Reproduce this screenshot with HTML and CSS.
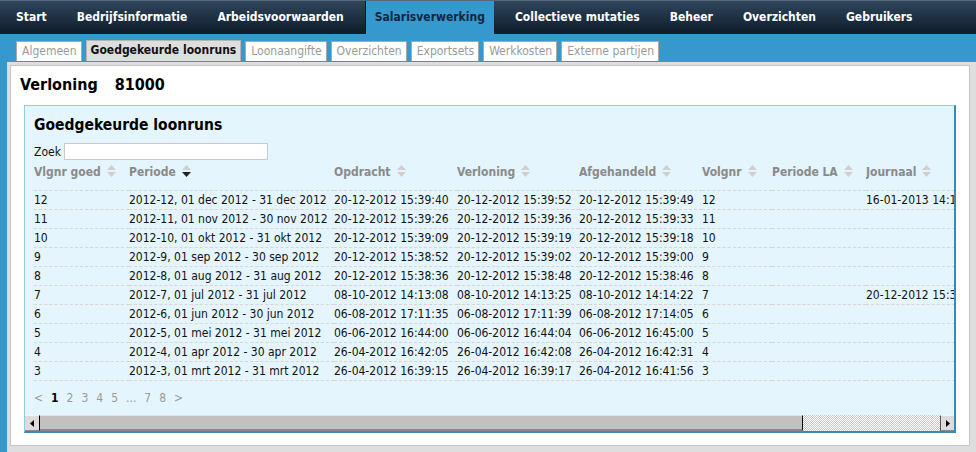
FILE: index.html
```html
<!DOCTYPE html>
<html lang="nl">
<head>
<meta charset="utf-8">
<title>Goedgekeurde loonruns</title>
<link rel="stylesheet" href="styles.css">
</head>
<body>
<nav class="topnav">
  <a class="nav-item">Start</a>
  <a class="nav-item">Bedrijfsinformatie</a>
  <a class="nav-item">Arbeidsvoorwaarden</a>
  <a class="nav-item active">Salarisverwerking</a>
  <a class="nav-item">Collectieve mutaties</a>
  <a class="nav-item">Beheer</a>
  <a class="nav-item">Overzichten</a>
  <a class="nav-item">Gebruikers</a>
</nav>
<div class="subtabs">
  <a class="subtab">Algemeen</a>
  <a class="subtab active">Goedgekeurde loonruns</a>
  <a class="subtab">Loonaangifte</a>
  <a class="subtab">Overzichten</a>
  <a class="subtab">Exportsets</a>
  <a class="subtab">Werkkosten</a>
  <a class="subtab">Externe partijen</a>
</div>
<div class="panel">
  <div class="page">
    <h1 class="page-title"><span>Verloning</span><span class="page-num">81000</span></h1>
    <section class="box">
      <h2 class="box-title">Goedgekeurde loonruns</h2>
      <div class="search">
        <label class="search-label">Zoek</label>
        <input class="search-input" type="text">
      </div>
      <div class="scroll">
        <table class="grid">
          <colgroup>
            <col class="c1"><col class="c2"><col class="c3"><col class="c4"><col class="c5"><col class="c6"><col class="c7"><col class="c8">
          </colgroup>
          <thead>
            <tr>
              <th>Vlgnr goed<svg class="sort" viewBox="0 0 9 14"><path d="M0 6 L4.5 1 L9 6Z" fill="#cfcfcf"/><path d="M0 8 L4.5 13 L9 8Z" fill="#cfcfcf"/></svg></th>
              <th>Periode<svg class="sort" viewBox="0 0 9 14"><path d="M0 6 L4.5 1 L9 6Z" fill="#cfcfcf"/><path d="M0 8 L4.5 13 L9 8Z" fill="#222"/></svg></th>
              <th>Opdracht<svg class="sort" viewBox="0 0 9 14"><path d="M0 6 L4.5 1 L9 6Z" fill="#cfcfcf"/><path d="M0 8 L4.5 13 L9 8Z" fill="#cfcfcf"/></svg></th>
              <th>Verloning<svg class="sort" viewBox="0 0 9 14"><path d="M0 6 L4.5 1 L9 6Z" fill="#cfcfcf"/><path d="M0 8 L4.5 13 L9 8Z" fill="#cfcfcf"/></svg></th>
              <th>Afgehandeld<svg class="sort" viewBox="0 0 9 14"><path d="M0 6 L4.5 1 L9 6Z" fill="#cfcfcf"/><path d="M0 8 L4.5 13 L9 8Z" fill="#cfcfcf"/></svg></th>
              <th>Volgnr<svg class="sort" viewBox="0 0 9 14"><path d="M0 6 L4.5 1 L9 6Z" fill="#cfcfcf"/><path d="M0 8 L4.5 13 L9 8Z" fill="#cfcfcf"/></svg></th>
              <th>Periode LA<svg class="sort" viewBox="0 0 9 14"><path d="M0 6 L4.5 1 L9 6Z" fill="#cfcfcf"/><path d="M0 8 L4.5 13 L9 8Z" fill="#cfcfcf"/></svg></th>
              <th>Journaal<svg class="sort" viewBox="0 0 9 14"><path d="M0 6 L4.5 1 L9 6Z" fill="#cfcfcf"/><path d="M0 8 L4.5 13 L9 8Z" fill="#cfcfcf"/></svg></th>
            </tr>
          </thead>
          <tbody>
            <tr><td>12</td><td>2012-12, 01 dec 2012 - 31 dec 2012</td><td>20-12-2012 15:39:40</td><td>20-12-2012 15:39:52</td><td>20-12-2012 15:39:49</td><td>12</td><td></td><td>16-01-2013 14:12:33</td></tr>
            <tr><td>11</td><td>2012-11, 01 nov 2012 - 30 nov 2012</td><td>20-12-2012 15:39:26</td><td>20-12-2012 15:39:36</td><td>20-12-2012 15:39:33</td><td>11</td><td></td><td></td></tr>
            <tr><td>10</td><td>2012-10, 01 okt 2012 - 31 okt 2012</td><td>20-12-2012 15:39:09</td><td>20-12-2012 15:39:19</td><td>20-12-2012 15:39:18</td><td>10</td><td></td><td></td></tr>
            <tr><td>9</td><td>2012-9, 01 sep 2012 - 30 sep 2012</td><td>20-12-2012 15:38:52</td><td>20-12-2012 15:39:02</td><td>20-12-2012 15:39:00</td><td>9</td><td></td><td></td></tr>
            <tr><td>8</td><td>2012-8, 01 aug 2012 - 31 aug 2012</td><td>20-12-2012 15:38:36</td><td>20-12-2012 15:38:48</td><td>20-12-2012 15:38:46</td><td>8</td><td></td><td></td></tr>
            <tr><td>7</td><td>2012-7, 01 jul 2012 - 31 jul 2012</td><td>08-10-2012 14:13:08</td><td>08-10-2012 14:13:25</td><td>08-10-2012 14:14:22</td><td>7</td><td></td><td>20-12-2012 15:39:58</td></tr>
            <tr><td>6</td><td>2012-6, 01 jun 2012 - 30 jun 2012</td><td>06-08-2012 17:11:35</td><td>06-08-2012 17:11:39</td><td>06-08-2012 17:14:05</td><td>6</td><td></td><td></td></tr>
            <tr><td>5</td><td>2012-5, 01 mei 2012 - 31 mei 2012</td><td>06-06-2012 16:44:00</td><td>06-06-2012 16:44:04</td><td>06-06-2012 16:45:00</td><td>5</td><td></td><td></td></tr>
            <tr><td>4</td><td>2012-4, 01 apr 2012 - 30 apr 2012</td><td>26-04-2012 16:42:05</td><td>26-04-2012 16:42:08</td><td>26-04-2012 16:42:31</td><td>4</td><td></td><td></td></tr>
            <tr><td>3</td><td>2012-3, 01 mrt 2012 - 31 mrt 2012</td><td>26-04-2012 16:39:15</td><td>26-04-2012 16:39:17</td><td>26-04-2012 16:41:56</td><td>3</td><td></td><td></td></tr>
          </tbody>
        </table>
        <div class="pager">
          <span class="pg">&lt;</span>
          <span class="pg current">1</span>
          <span class="pg">2</span>
          <span class="pg">3</span>
          <span class="pg">4</span>
          <span class="pg">5</span>
          <span class="pg">...</span>
          <span class="pg">7</span>
          <span class="pg">8</span>
          <span class="pg">&gt;</span>
        </div>
      </div>
      <div class="hscroll">
        <div class="sb-btn sb-left"><svg viewBox="0 0 4 7" class="sb-arrow"><path d="M4 0 L0 3.5 L4 7Z" fill="#000"/></svg></div>
        <div class="sb-thumb"></div>
        <div class="sb-track"></div>
        <div class="sb-btn sb-right"><svg viewBox="0 0 4 7" class="sb-arrow"><path d="M0 0 L4 3.5 L0 7Z" fill="#000"/></svg></div>
      </div>
    </section>
  </div>
</div>
</body>
</html>
```
FILE: styles.css
```css
html, body {
  margin: 0;
  padding: 0;
}
body {
  background: #3599cd;
  font-family: "DejaVu Sans Condensed", "DejaVu Sans", sans-serif;
  font-size: 12px;
  color: #1a1a1a;
  height: 452px;
  overflow: hidden;
}

/* top navigation */
.topnav {
  display: flex;
  height: 34px;
  padding-left: 7px;
  background: linear-gradient(#30465b 0%, #1f3346 45%, #0f1b28 100%);
  border-top: 1px solid #56697b;
  box-sizing: border-box;
}
.nav-item {
  display: block;
  padding: 0 9px;
  margin-right: 12px;
  line-height: 32px;
  color: #fff;
  font-weight: bold;
  font-size: 12px;
  white-space: nowrap;
}
.nav-item.active {
  background: #3599cd;
  color: #15263b;
  border-left: 1px solid #0b1520;
  height: 33px;
}

/* sub tabs */
.subtabs {
  display: flex;
  gap: 4px;
  height: 28px;
  padding: 7px 0 0 16px;
  box-sizing: border-box;
  align-items: flex-start;
}
.subtab {
  display: block;
  height: 20px;
  line-height: 19px;
  padding: 0 4px 0 5px;
  background: #fff;
  border: 1px solid #a9a9a9;
  border-bottom: 0;
  box-sizing: border-box;
  color: #9a9a9a;
  white-space: nowrap;
}
.subtab.active {
  height: 21px;
  margin-top: -1px;
  padding: 0 4px;
  background: #dedede;
  color: #111;
  font-weight: bold;
  border-color: #b5b5b5;
}

/* content panel */
.panel {
  margin-left: 7px;
  background: #dedede;
  padding: 3px 6px 6px 3px;
  height: 390px;
  box-sizing: border-box;
}
.page {
  background: #fff;
  border: 1px solid #c6c6c6;
  height: 100%;
  box-sizing: border-box;
  padding: 8px 13px 0 13px;
}
.page-title {
  margin: 0 0 0 -4px;
  font-size: 16px;
  line-height: 22px;
  font-weight: bold;
  color: #000;
}
.page-num {
  margin-left: 17px;
}

/* blue box */
.box {
  margin-top: 9px;
  background: #e4f5fd;
  border-top: 1px solid #8fcbe8;
  border-left: 1px solid #8fcbe8;
  border-right: 2px solid #3e88b4;
  border-bottom: 2px solid #3e88b4;
}
.box-title {
  margin: 0;
  padding: 9px 0 0 9px;
  font-size: 15.5px;
  line-height: 20px;
  font-weight: bold;
  color: #000;
}
.search {
  display: flex;
  align-items: center;
  gap: 3px;
  margin-top: 8px;
  padding-left: 9px;
  height: 17px;
}
.search-label {
  color: #111;
}
.search-input {
  width: 204px;
  height: 17px;
  margin: 0;
  padding: 0;
  border: 1px solid #c9c9c9;
  background: #fff;
  box-sizing: border-box;
}

/* table */
.scroll {
  overflow: hidden;
}
.grid {
  margin-left: 9px;
  border-collapse: collapse;
  table-layout: fixed;
  width: 1032px;
  white-space: nowrap;
}
.c1 { width: 95px; }
.c2 { width: 205px; }
.c3 { width: 123px; }
.c4 { width: 122px; }
.c5 { width: 123px; }
.c6 { width: 70px; }
.c7 { width: 94px; }
.c8 { width: 200px; }
.grid th {
  text-align: left;
  color: #8a8a8a;
  font-weight: bold;
  padding: 4px 0 10px 0;
  line-height: 16px;
  border-bottom: 1px dashed #dcd4d4;
  overflow: hidden;
}
.sort {
  width: 9px;
  height: 14px;
  margin-left: 6px;
  vertical-align: -2px;
}
.grid td {
  height: 18px;
  padding: 0;
  line-height: 18px;
  border-bottom: 1px dashed #dcd4d4;
  overflow: hidden;
  color: #111;
}
.pager {
  display: flex;
  height: 34px;
  padding: 9px 0 0 9px;
  box-sizing: border-box;
  line-height: 16px;
  color: #9a9a9a;
}
.pg {
  margin-right: 8px;
}
.pg.current {
  color: #000;
  font-weight: bold;
}

/* fake horizontal scrollbar */
.hscroll {
  display: flex;
  height: 16px;
}
.sb-btn {
  width: 14px;
  background: #dedbdb;
  border-top: 1px solid #f4f4f4;
  border-bottom: 1px solid #8a8a8a;
  box-sizing: border-box;
  display: flex;
  align-items: center;
  justify-content: center;
}
.sb-left {
  border-right: 1px solid #000;
  width: 15px;
}
.sb-right {
  border-left: 1px solid #555;
}
.sb-arrow {
  width: 4px;
  height: 7px;
}
.sb-thumb {
  width: 763px;
  background: #c4c0c0;
  border-top: 1px solid #e6e4e4;
  border-bottom: 2px solid #8a8888;
  border-right: 1px solid #000;
  box-sizing: border-box;
}
.sb-track {
  flex: 1;
  background: repeating-conic-gradient(#c8c6c6 0 25%, #ffffff 0 50%) 0 0 / 2px 2px;
}
```
